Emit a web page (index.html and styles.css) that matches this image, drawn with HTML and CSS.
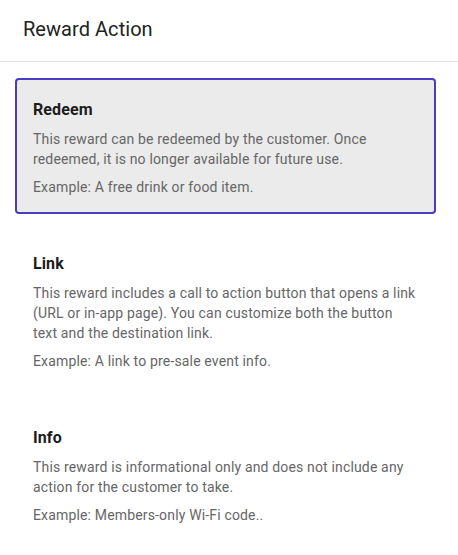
FILE: index.html
```html
<!DOCTYPE html>
<html lang="en">
<head>
<meta charset="utf-8">
<title>Reward Action</title>
<link rel="stylesheet" href="styles.css">
</head>
<body>
<div class="panel">
  <header class="panel-header">
    <h1 class="panel-title">Reward Action</h1>
  </header>
  <div class="options">
    <div class="option selected">
      <h2 class="option-title">Redeem</h2>
      <p class="option-text">This reward can be redeemed by the customer. Once redeemed, it is no longer available for future use.</p>
      <p class="option-text">Example: A free drink or food item.</p>
    </div>
    <div class="option">
      <h2 class="option-title">Link</h2>
      <p class="option-text">This reward includes a call to action button that opens a link (URL or in-app page). You can customize both the button text and the destination link.</p>
      <p class="option-text">Example: A link to pre-sale event info.</p>
    </div>
    <div class="option">
      <h2 class="option-title">Info</h2>
      <p class="option-text">This reward is informational only and does not include any action for the customer to take.</p>
      <p class="option-text">Example: Members-only Wi-Fi code..</p>
    </div>
  </div>
</div>
</body>
</html>
```

FILE: styles.css
```css
html, body {
  margin: 0;
  padding: 0;
  background: #ffffff;
}
body {
  font-family: Roboto, "Noto Sans", sans-serif;
  color: #1f1f1f;
}
.panel {
  width: 458px;
}
.panel-header {
  height: 61px;
  border-bottom: 1px solid #e2e2e2;
  display: flex;
  align-items: center;
  padding: 0 23px;
  box-sizing: content-box;
}
.panel-title {
  margin: 0;
  font-size: 20px;
  font-weight: 400;
  line-height: 28px;
  letter-spacing: 0.05px;
  color: #222222;
  position: relative;
  top: -2px;
}
.options {
  display: flex;
  flex-direction: column;
  gap: 18px;
  padding: 16px 22px 0 15px;
}
.option {
  border: 2px solid transparent;
  border-radius: 4px;
  padding: 16px 15px 15px 16px;
}
.option.selected {
  background: #ebebeb;
  border-color: #4b3bc4;
}
.option-title {
  margin: 0 0 5px;
  font-size: 16px;
  font-weight: 700;
  line-height: 28px;
  letter-spacing: 0.1px;
  color: #1c1c1c;
}
.option-text {
  margin: 0;
  font-size: 14px;
  line-height: 20px;
  letter-spacing: 0.16px;
  color: #666666;
}
.option-text + .option-text {
  margin-top: 8px;
}
```
